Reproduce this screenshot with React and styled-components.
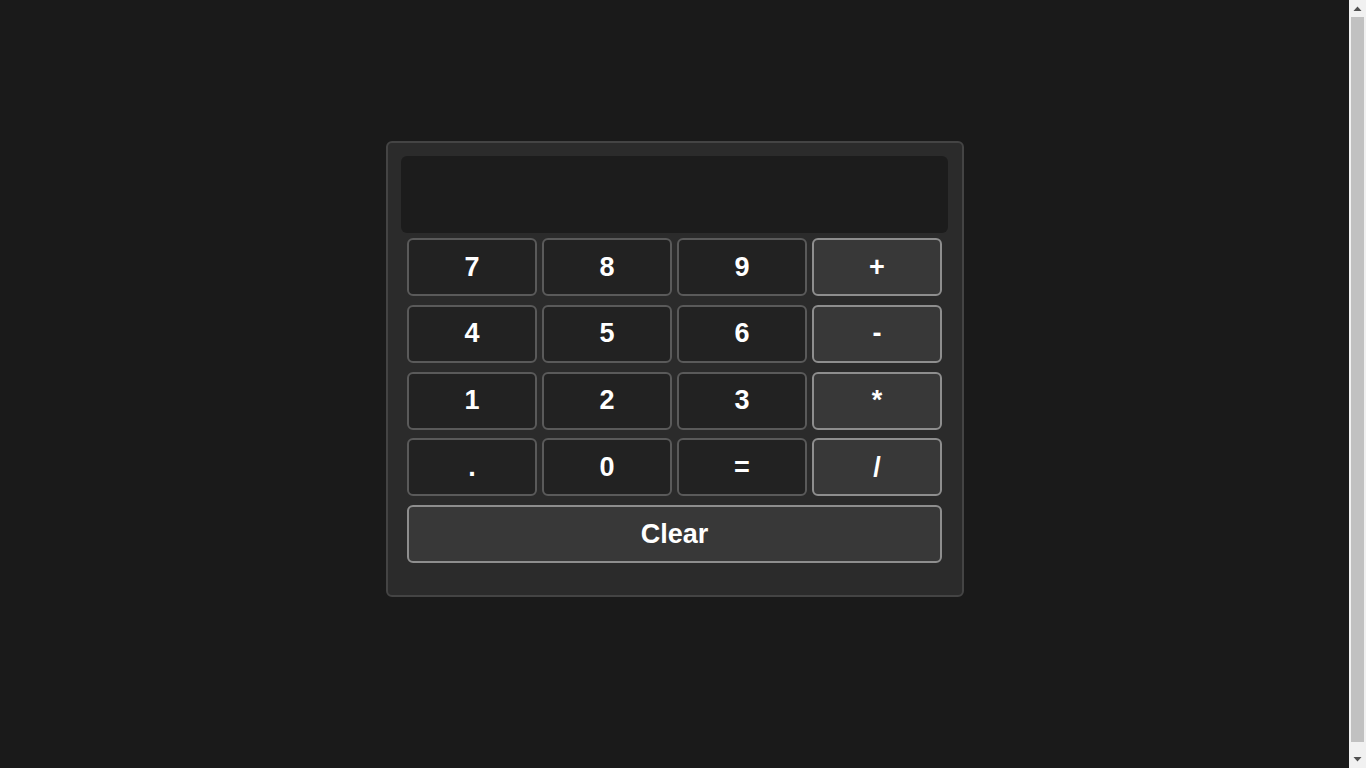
import React, { useState } from 'react'
import styled, { createGlobalStyle } from 'styled-components'

const GlobalStyle = createGlobalStyle`
    body {
        margin: 8px;
        background: #1a1a1a;
        font-family: "Liberation Sans", Arial, sans-serif;
    }
`

const keys = [
    ['7', false], ['8', false], ['9', false], ['+', true],
    ['4', false], ['5', false], ['6', false], ['-', true],
    ['1', false], ['2', false], ['3', false], ['*', true],
    ['.', false], ['0', false], ['=', false], ['/', true],
]

function App() {
    const [value, setValue] = useState('')

    const press = (k) => {
        if (k === '=') {
            try {
                // eslint-disable-next-line no-new-func
                setValue(String(Function('return (' + value + ')')()))
            } catch (e) {
                setValue('Error')
            }
            return
        }
        setValue(value + k)
    }

    return (
        <Page>
            <GlobalStyle />
            <Calculator>
                <Display>{value}</Display>
                <Keys>
                    {keys.map(([k, op]) => (
                        <Key key={k} $op={op} onClick={() => press(k)}>{k}</Key>
                    ))}
                    <Key $op $wide onClick={() => setValue('')}>Clear</Key>
                </Keys>
            </Calculator>
            <ScrollTrack>
                <svg width="17" height="17" viewBox="0 0 17 17"><path d="M4.5 11 L8.5 6.5 L12.5 11 Z" fill="#505050" /></svg>
                <ScrollThumb />
                <svg width="17" height="17" viewBox="0 0 17 17"><path d="M4.5 6 L8.5 10.5 L12.5 6 Z" fill="#505050" /></svg>
            </ScrollTrack>
        </Page>
    )
}

export default App

const Page = styled.div`
    min-height: 100vh;
    box-sizing: border-box;
    display: flex;
    justify-content: center;
    align-items: flex-start;
    padding: 133px 17px 0 0;
`

const Calculator = styled.div`
    width: 578px;
    box-sizing: border-box;
    background: #2b2b2b;
    border: 2px solid #444;
    border-radius: 6px;
    padding: 13px 13.5px 32px;
`

const Display = styled.div`
    height: 77px;
    box-sizing: border-box;
    background: #1c1c1c;
    border-radius: 6px;
    margin-bottom: 5px;
    padding: 0 16px;
    display: flex;
    align-items: center;
    justify-content: flex-end;
    color: #fff;
    font-size: 32px;
    font-weight: bold;
`

const Keys = styled.div`
    display: grid;
    grid-template-columns: repeat(4, 130px);
    grid-auto-rows: 58px;
    gap: 8.75px 5px;
    padding: 0 6px;
`

const Key = styled.button`
    grid-column: ${p => (p.$wide ? '1 / -1' : 'auto')};
    box-sizing: border-box;
    background: ${p => (p.$op ? '#383838' : '#222')};
    border: 2px solid ${p => (p.$op ? '#8e8e8e' : '#5a5a5a')};
    border-radius: 6px;
    color: #fff;
    font-family: "Liberation Sans", Arial, sans-serif;
    font-size: 27px;
    font-weight: bold;
    cursor: pointer;
    padding: 0;

    &:hover {
        opacity: 0.85;
    }
`

const ScrollTrack = styled.div`
    position: fixed;
    top: 0;
    right: 0;
    width: 17px;
    height: 100vh;
    background: #f1f1f1;
    display: flex;
    flex-direction: column;
    align-items: center;
`

const ScrollThumb = styled.div`
    flex: 1;
    width: 13px;
    margin: 0 0 9px 2px;
    align-self: flex-start;
    background: #c1c1c1;
`
